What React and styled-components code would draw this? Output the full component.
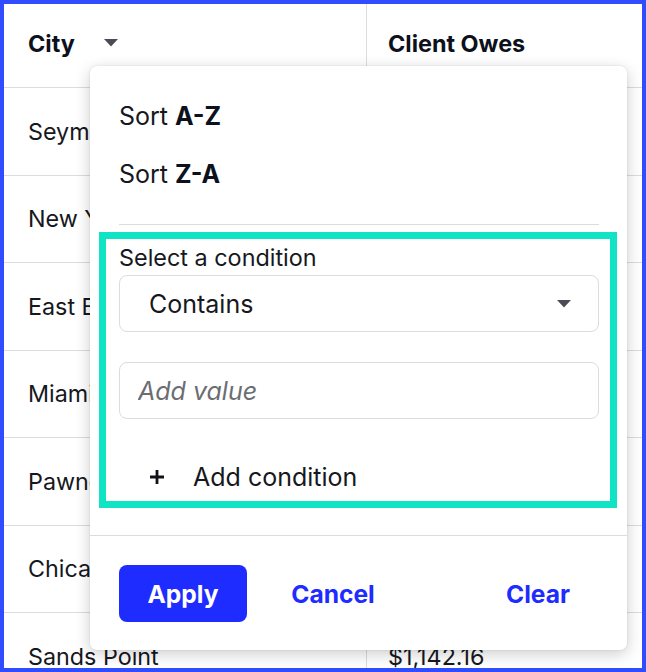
import React from "react";
import styled, { createGlobalStyle } from "styled-components";

const Global = createGlobalStyle`
  html, body { margin: 0; padding: 0; background: #fff; }
  body { font-family: Inter, "Noto Sans", sans-serif; color: #111318; }
  * { box-sizing: border-box; }
`;

const Frame = styled.div`
  position: relative;
  width: 646px;
  height: 672px;
  border: 4px solid #2f4cff;
  overflow: hidden;
  background: #fff;
`;

const Table = styled.div`
  display: grid;
  grid-template-columns: 362px 1fr;
`;

const HeadCell = styled.div`
  height: 84px;
  display: flex;
  align-items: center;
  gap: 29px;
  padding: 0 0 5px ${(p) => (p.$divided ? "21px" : "24px")};
  border-bottom: 1px solid #dcdcdc;
  border-left: ${(p) => (p.$divided ? "1px solid #dcdcdc" : "none")};
  font-weight: 700;
  font-size: 23.4px;
  color: #0c111b;
`;

const Cell = styled.div`
  height: 87.5px;
  display: flex;
  align-items: center;
  padding-left: ${(p) => (p.$divided ? "21px" : "24px")};
  border-bottom: 1px solid #dcdcdc;
  border-left: ${(p) => (p.$divided ? "1px solid #dcdcdc" : "none")};
  font-size: 23.3px;
  color: #16181d;
  white-space: nowrap;
  overflow: hidden;
`;

const Popup = styled.div`
  position: absolute;
  left: 86px;
  top: 62px;
  width: 537px;
  height: 584px;
  background: #fff;
  border-radius: 7px;
  box-shadow: 0 4px 16px rgba(0, 0, 0, 0.2), 0 0 2px rgba(0, 0, 0, 0.12);
  display: flex;
  flex-direction: column;
`;

const SortList = styled.div`
  display: flex;
  flex-direction: column;
  padding: 21px 29px 0;
`;

const SortItem = styled.div`
  height: 58px;
  display: flex;
  align-items: center;
  font-size: 25px;
  color: #16181d;
  b { font-weight: 700; margin-left: 7px; color: #0c111b; }
`;

const Divider = styled.div`
  height: 1px;
  background: #dcdcdc;
  margin: ${(p) => p.$margin || "0"};
`;

const FilterSection = styled.div`
  margin: 7px 10px 0 9px;
  border: 7px solid #10e4c5;
  padding: 6px 11px 4px 13px;
  display: flex;
  flex-direction: column;
`;

const Label = styled.div`
  font-size: 23.4px;
  line-height: 26px;
  color: #16181d;
`;

const SelectBox = styled.div`
  margin-top: 4px;
  height: 57px;
  border: 1px solid #dcdcdc;
  border-radius: 8px;
  display: flex;
  align-items: center;
  justify-content: space-between;
  padding: 0 27px 0 29px;
  font-size: 25px;
  color: #16181d;
`;

const ValueInput = styled.input`
  margin-top: 30px;
  height: 57px;
  border: 1px solid #dcdcdc;
  border-radius: 8px;
  padding: 0 18px;
  font-family: Inter, "Noto Sans", sans-serif;
  font-size: 25px;
  color: #16181d;
  outline: none;
  &::placeholder { color: #6b6d72; font-style: italic; }
`;

const AddRow = styled.div`
  margin-top: 38px;
  height: 40px;
  display: flex;
  align-items: center;
  gap: 28px;
  padding-left: 30px;
  font-size: 25px;
  color: #16181d;
`;

const Footer = styled.div`
  display: flex;
  align-items: center;
  padding: 29px 25px 0 29px;
`;

const Button = styled.button`
  width: 128px;
  height: 57px;
  padding: 0;
  border: none;
  border-radius: 8px;
  font-family: Inter, "Noto Sans", sans-serif;
  font-weight: 700;
  font-size: 24.6px;
  cursor: pointer;
  background: ${(p) => (p.$primary ? "#1f2cff" : "transparent")};
  color: ${(p) => (p.$primary ? "#fff" : "#1f2cff")};
  margin-left: ${(p) => p.$ml || "0"};
`;

const Caret = ({ color = "#4b4b55" }) => (
  <svg width="14" height="8" viewBox="0 0 14 8">
    <path d="M0 0 H14 L7 7.5 Z" fill={color} />
  </svg>
);

const Plus = () => (
  <svg width="16" height="16" viewBox="0 0 16 16">
    <path d="M8 1 V15 M1 8 H15" stroke="#111318" strokeWidth="2.8" />
  </svg>
);

const rows = [
  ["Seymour", "$2,340.00"],
  ["New York", "$865.50"],
  ["East Brunswick", "$1,020.75"],
  ["Miami", "$410.20"],
  ["Pawnee", "$3,118.90"],
  ["Chicago", "$745.00"],
  ["Sands Point", "$1,142.16"],
];

export default function App() {
  return (
    <>
      <Global />
      <Frame>
        <Table>
          <HeadCell>
            <span>City</span>
            <Caret />
          </HeadCell>
          <HeadCell $divided>Client Owes</HeadCell>
          {rows.map(([c, v]) => (
            <React.Fragment key={c}>
              <Cell>{c}</Cell>
              <Cell $divided>{v}</Cell>
            </React.Fragment>
          ))}
        </Table>
        <Popup>
          <SortList>
            <SortItem>
              Sort<b>A-Z</b>
            </SortItem>
            <SortItem>
              Sort<b>Z-A</b>
            </SortItem>
          </SortList>
          <Divider $margin="21px 28px 0 29px" />
          <FilterSection>
            <Label>Select a condition</Label>
            <SelectBox>
              <span>Contains</span>
              <Caret />
            </SelectBox>
            <ValueInput placeholder="Add value" />
            <AddRow>
              <Plus />
              <span>Add condition</span>
            </AddRow>
          </FilterSection>
          <Divider $margin="27px 0 0" />
          <Footer>
            <Button $primary>Apply</Button>
            <Button $ml="22px">Cancel</Button>
            <Button $ml="auto">Clear</Button>
          </Footer>
        </Popup>
      </Frame>
    </>
  );
}
